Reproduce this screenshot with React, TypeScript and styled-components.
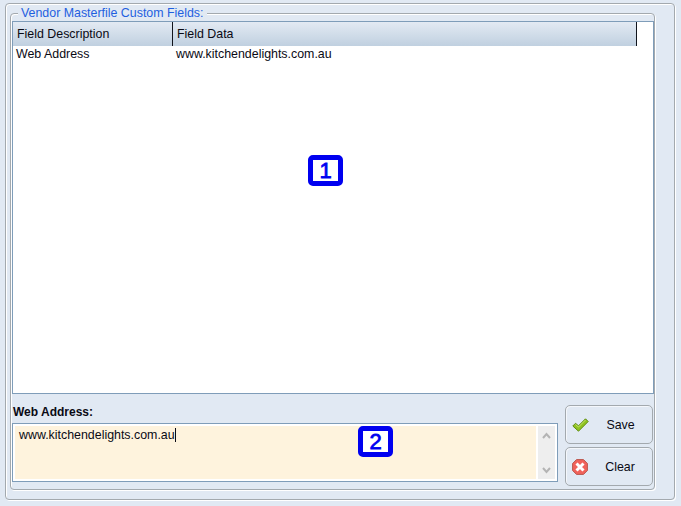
import React from "react";
import styled, { createGlobalStyle } from "styled-components";

const Global = createGlobalStyle`
  html, body { margin: 0; padding: 0; background: #e1e9f3; }
  body { font-family: "Liberation Sans", Arial, sans-serif; font-size: 12.4px; color: #0a0a14; }
  * { box-sizing: border-box; }
`;

const Page = styled.div`
  width: 681px;
  height: 506px;
  padding: 3px 6px 6px 5px;
  position: relative;
  overflow: hidden;
`;
const OuterPanel = styled.div`
  height: 100%;
  border: 1px solid #a3a9ae;
  border-radius: 4px;
  box-shadow: 1px 1px 0 #fff, inset 1px 1px 0 #fff;
  padding: 9px 19px 9px 4px;
`;
const Group = styled.div`
  position: relative;
  height: 100%;
  border: 1px solid #a3a9ae;
  border-radius: 4px;
  box-shadow: 1px 1px 0 #fff, inset 1px 1px 0 #fff;
  padding: 7px 0 2px 1px;
  display: flex;
  flex-direction: column;
`;
const Legend = styled.span`
  position: absolute;
  top: -7px;
  left: 7px;
  padding: 0 3px;
  background: #e1e9f3;
  color: #1f5fe0;
  line-height: 13px;
  white-space: nowrap;
`;
const GridFrame = styled.div`
  height: 373px;
  flex: none;
  border: 1px solid #7f9db9;
  background: #fff;
  display: flex;
  flex-direction: column;
`;
const HeaderRow = styled.div`
  display: flex;
  height: 24px;
  width: 624px;
  background: linear-gradient(#e3eaf3, #c0d0e0);
  border-right: 1px solid #10141c;
`;
const HeaderCell = styled.div<{ $width: number }>`
  width: ${(p) => p.$width}px;
  flex: none;
  padding-left: 4px;
  line-height: 24px;
  border-right: 1px solid #10141c;
  &:last-child { border-right: 0; flex: 1; }
`;
const DataRow = styled.div`
  display: flex;
  height: 16px;
`;
const DataCell = styled.div<{ $width: number }>`
  width: ${(p) => p.$width}px;
  flex: none;
  padding-left: 3px;
  line-height: 16px;
`;
const Bottom = styled.div`
  flex: 1;
  display: flex;
  gap: 7px;
  padding-top: 11px;
`;
const EditorColumn = styled.div`
  width: 546px;
  flex: none;
  display: flex;
  flex-direction: column;
`;
const FieldLabel = styled.div`
  font-size: 12px;
  font-weight: bold;
  line-height: 14px;
  height: 18px;
  padding-left: 1px;
`;
const Editor = styled.div`
  height: 59px;
  border: 1px solid #7f9db9;
  background: #fff;
  padding: 2px;
  display: flex;
`;
const EditorText = styled.div`
  flex: 1;
  background: #fef3dd;
  padding: 2px 4px;
  line-height: 15px;
`;
const Caret = styled.span`
  display: inline-block;
  width: 1px;
  height: 14px;
  background: #0a0a14;
  vertical-align: -3px;
`;
const Scrollbar = styled.div`
  width: 17px;
  margin-left: 2px;
  background: #eeeeee;
  display: flex;
  flex-direction: column;
  justify-content: space-between;
  align-items: center;
  padding: 6px 0 5px;
`;
const ButtonColumn = styled.div`
  width: 88px;
  flex: none;
  display: flex;
  flex-direction: column;
  gap: 3px;
`;
const ActionButton = styled.button`
  height: 39px;
  border: 1px solid #a3a9ae;
  border-radius: 5px;
  background: #e1e9f3;
  box-shadow: inset 1px 1px 0 #f4f7fb;
  font: inherit;
  color: inherit;
  padding: 0 0 0 6px;
  display: flex;
  align-items: center;
`;
const ButtonLabel = styled.span`
  flex: 1;
  text-align: center;
`;
const Badge = styled.div<{ $x: number; $y: number }>`
  position: absolute;
  left: ${(p) => p.$x}px;
  top: ${(p) => p.$y}px;
  width: 35px;
  height: 31px;
  border: 5px solid #0000f0;
  border-radius: 5px;
  background: #fff;
  color: #0000f0;
  font-family: "Liberation Sans", Arial, sans-serif;
  font-size: 22px;
  font-weight: normal;
  -webkit-text-stroke: 0.8px #0000f0;
  line-height: 21px;
  text-align: center;
`;

const Chevron = ({ up }: { up?: boolean }) => (
  <svg width="9" height="7" viewBox="0 0 9 7">
    <path d={up ? "M1 6 L4.5 2 L8 6" : "M1 1 L4.5 5 L8 1"} fill="none" stroke="#b4b4b4" strokeWidth="2" />
  </svg>
);

const CheckIcon = () => (
  <svg width="17" height="14" viewBox="0 0 17 14">
    <path d="M.8 8 L3.5 5.3 L6.5 7.8 L13.5 .8 L16.2 3.5 L6.5 13.2 Z" fill="#8fc31f" stroke="#5f8a12" strokeWidth="1" strokeLinejoin="round" />
    <path d="M3.5 6.5 L6.5 9 L13.5 2" fill="none" stroke="#c4e36a" strokeWidth="1" />
  </svg>
);

const ClearIcon = () => (
  <svg width="16" height="16" viewBox="0 0 16 16">
    <path d="M4.5 .6 H11.5 L15.4 4.5 V11.5 L11.5 15.4 H4.5 L.6 11.5 V4.5 Z" fill="#f0625a" stroke="#b9554d" strokeWidth="1" strokeLinejoin="round" />
    <path d="M4.5 4.5 L11.5 11.5 M11.5 4.5 L4.5 11.5" stroke="#fff" strokeWidth="3" />
  </svg>
);

export default function App() {
  return (
    <Page>
      <Global />
      <OuterPanel>
        <Group>
          <Legend>Vendor Masterfile Custom Fields:</Legend>
          <GridFrame>
            <HeaderRow>
              <HeaderCell $width={160}>Field Description</HeaderCell>
              <HeaderCell $width={463}>Field Data</HeaderCell>
            </HeaderRow>
            <DataRow>
              <DataCell $width={160}>Web Address</DataCell>
              <DataCell $width={463}>www.kitchendelights.com.au</DataCell>
            </DataRow>
          </GridFrame>
          <Bottom>
            <EditorColumn>
              <FieldLabel>Web Address:</FieldLabel>
              <Editor>
                <EditorText>
                  www.kitchendelights.com.au
                  <Caret />
                </EditorText>
                <Scrollbar>
                  <Chevron up />
                  <Chevron />
                </Scrollbar>
              </Editor>
            </EditorColumn>
            <ButtonColumn>
              <ActionButton>
                <CheckIcon />
                <ButtonLabel>Save</ButtonLabel>
              </ActionButton>
              <ActionButton>
                <ClearIcon />
                <ButtonLabel>Clear</ButtonLabel>
              </ActionButton>
            </ButtonColumn>
          </Bottom>
        </Group>
      </OuterPanel>
      <Badge $x={308} $y={155}>1</Badge>
      <Badge $x={358} $y={426}>2</Badge>
    </Page>
  );
}
